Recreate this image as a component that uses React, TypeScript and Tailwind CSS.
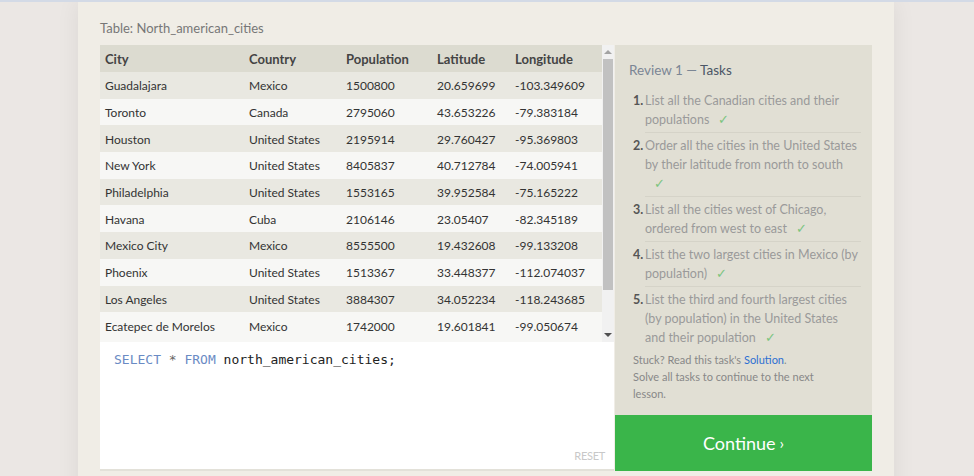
import React from "react";

const rows: [string, string, string, string, string][] = [
  ["Guadalajara", "Mexico", "1500800", "20.659699", "-103.349609"],
  ["Toronto", "Canada", "2795060", "43.653226", "-79.383184"],
  ["Houston", "United States", "2195914", "29.760427", "-95.369803"],
  ["New York", "United States", "8405837", "40.712784", "-74.005941"],
  ["Philadelphia", "United States", "1553165", "39.952584", "-75.165222"],
  ["Havana", "Cuba", "2106146", "23.05407", "-82.345189"],
  ["Mexico City", "Mexico", "8555500", "19.432608", "-99.133208"],
  ["Phoenix", "United States", "1513367", "33.448377", "-112.074037"],
  ["Los Angeles", "United States", "3884307", "34.052234", "-118.243685"],
  ["Ecatepec de Morelos", "Mexico", "1742000", "19.601841", "-99.050674"],
];

const cols = ["w-[144px]", "w-[97px]", "w-[91px]", "w-[78px]", "w-[92px]"];
const heads = ["City", "Country", "Population", "Latitude", "Longitude"];

function Check() {
  return <span className="ml-[9px] text-[#7cc47f]">✓</span>;
}

const tasks: React.ReactNode[] = [
  <>List all the Canadian cities and their populations<Check /></>,
  <>Order all the cities in the United States by their latitude from north to south<br /><Check /></>,
  <>List all the cities west of Chicago, ordered from west to east<Check /></>,
  <>List the two largest cities in Mexico (by population)<Check /></>,
  <>List the third and fourth largest cities (by population) in the United States and their population<Check /></>,
];

export default function App() {
  return (
    <div
      className="w-[974px] h-[476px] overflow-hidden bg-[#ebe7e4] border-t-2 border-[#d3dae6]"
      style={{ fontFamily: "Lato, 'Open Sans', sans-serif" }}
    >
      <div className="ml-[78px] w-[816px] h-[500px] bg-[#f0ede6] shadow-[0_0_22px_rgba(0,0,0,0.07)] px-[22px]">
        <div className="h-[43px] pt-[17px] text-[13px] leading-[18px] text-[#777]">
          Table: North_american_cities
        </div>
        <div className="flex gap-[1px]">
          {/* left column */}
          <div className="w-[514px] flex flex-col">
            <div className="h-[297px] flex overflow-hidden">
              <div className="w-[502px] overflow-hidden bg-[#f7f7f5]">
                <div className="flex h-[27px] bg-[#dcdbd0] items-center pt-[2px] text-[13px] font-bold text-[#444]">
                  {heads.map((h, i) => (
                    <div key={h} className={`${cols[i]} pl-[5px]`}>{h}</div>
                  ))}
                </div>
                {rows.map((r, ri) => (
                  <div
                    key={ri}
                    className={`flex h-[26.7px] items-center pt-[2px] text-[12px] text-[#333] ${ri % 2 === 0 ? "bg-[#e9e8e1]" : "bg-[#f7f7f5]"}`}
                  >
                    {r.map((c, i) => (
                      <div key={i} className={`${cols[i]} pl-[5px] whitespace-nowrap`}>{c}</div>
                    ))}
                  </div>
                ))}
              </div>
              <div className="w-[12px] bg-[#f1f1f1] flex flex-col items-center">
                <div className="h-[14px] flex items-center justify-center">
                  <div className="w-0 h-0 border-l-[4px] border-r-[4px] border-b-[4px] border-l-transparent border-r-transparent border-b-[#a3a3a3]" />
                </div>
                <div className="w-[10px] h-[231px] bg-[#c1c1c1]" />
                <div className="flex-1" />
                <div className="h-[14px] flex items-center justify-center">
                  <div className="w-0 h-0 border-l-[4px] border-r-[4px] border-t-[4px] border-l-transparent border-r-transparent border-t-[#505050]" />
                </div>
              </div>
            </div>
            <div className="h-[129px] bg-white border-b-2 border-[#e3e1d9] relative pl-[14px] pt-[9px]">
              <div
                className="text-[13px] leading-[18px] text-[#222]"
                style={{ fontFamily: "'DejaVu Sans Mono', monospace" }}
              >
                <span className="text-[#6a8bc4]">SELECT</span>{" "}
                <span className="text-[#666]">*</span>{" "}
                <span className="text-[#6a8bc4]">FROM</span> north_american_cities;
              </div>
              <div className="absolute right-[9px] bottom-[5px] text-[11px] text-[#c8c8c8] tracking-tight">
                RESET
              </div>
            </div>
          </div>
          {/* right column */}
          <div className="w-[257px] flex flex-col">
            <div className="h-[370px] bg-[#e1dfd4] pl-[14px] pr-[11px] pt-[16px]">
              <div className="text-[13.5px] leading-[18px] text-[#7b8694]">
                Review 1 — <span className="text-[#4b5666]">Tasks</span>
              </div>
              <ol className="mt-[12px]">
                {tasks.map((t, i) => (
                  <li key={i} className="flex">
                    <span className="w-[16px] pl-[4px] text-[12.5px] leading-[19px] font-bold text-[#555] shrink-0">
                      {i + 1}.
                    </span>
                    <div
                      className={`flex-1 text-[12.5px] leading-[19px] text-[#9a9a9a] pb-[3px] mb-[3px] ${i < 4 ? "border-b border-[#d5d3c8]" : ""}`}
                    >
                      {t}
                    </div>
                  </li>
                ))}
              </ol>
              <div className="pl-[4px] -mt-[2px] text-[11px] leading-[17px] text-[#888]">
                Stuck? Read this task's <span className="text-[#2d6fd2]">Solution</span>.
                <br />
                Solve all tasks to continue to the next
                <br />
                lesson.
              </div>
            </div>
            <div className="h-[56px] bg-[#3ab54a] flex items-center justify-center text-white text-[18px]">
              Continue <span className="ml-[4px] text-[16px]">›</span>
            </div>
          </div>
        </div>
      </div>
    </div>
  );
}
